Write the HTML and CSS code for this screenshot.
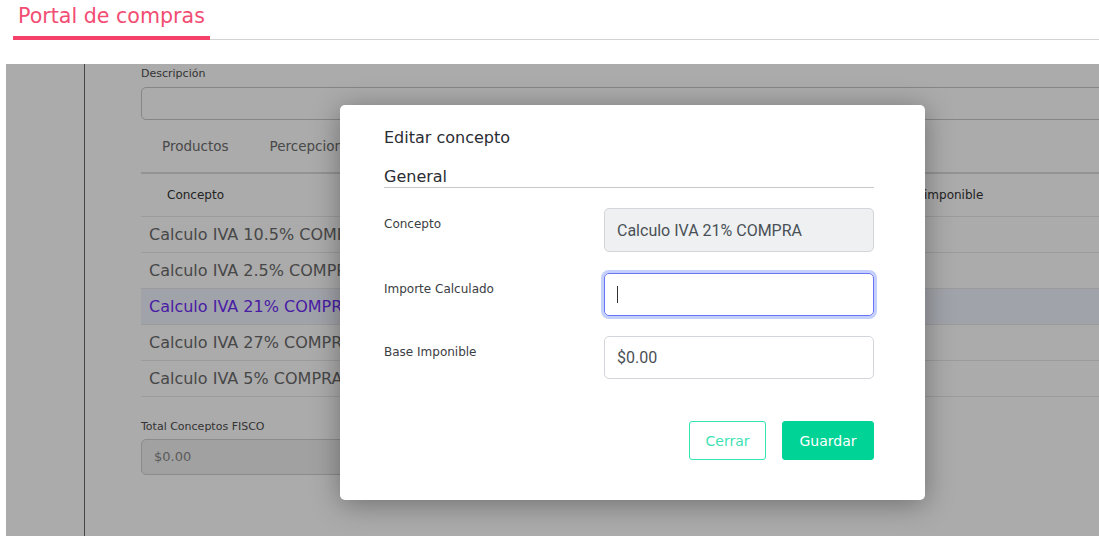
FILE: index.html
```html
<!DOCTYPE html>
<html lang="es">
<head>
<meta charset="utf-8">
<title>Portal de compras</title>
<link rel="stylesheet" href="styles.css">
</head>
<body>
<header class="topbar">
  <div class="tab-active">Portal de compras</div>
</header>
<div class="app">
  <aside class="sidebar"></aside>
  <main class="content">
    <label class="lbl">Descripción</label>
    <div class="desc-input"></div>
    <nav class="tabs">
      <span class="tab">Productos</span>
      <span class="tab">Percepciones</span>
      <span class="tab">Conceptos</span>
    </nav>
    <div class="table">
      <div class="thead">
        <div class="th">Concepto</div>
        <div class="th">Importe calculado</div>
        <div class="th">Base imponible</div>
      </div>
      <div class="tr"><div class="td">Calculo IVA 10.5% COMPRA</div><div class="td"></div><div class="td"></div></div>
      <div class="tr"><div class="td">Calculo IVA 2.5% COMPRA</div><div class="td"></div><div class="td"></div></div>
      <div class="tr selected"><div class="td">Calculo IVA 21% COMPRA</div><div class="td"></div><div class="td"></div></div>
      <div class="tr"><div class="td">Calculo IVA 27% COMPRA</div><div class="td"></div><div class="td"></div></div>
      <div class="tr"><div class="td">Calculo IVA 5% COMPRA</div><div class="td"></div><div class="td"></div></div>
    </div>
    <label class="lbl total-lbl">Total Conceptos FISCO</label>
    <div class="total-input">$0.00</div>
  </main>
  <div class="backdrop"></div>
  <section class="modal">
    <h2 class="modal-title">Editar concepto</h2>
    <h3 class="section-title">General</h3>
    <div class="form-row">
      <span class="form-label">Concepto</span>
      <div class="field disabled">Calculo IVA 21% COMPRA</div>
    </div>
    <div class="form-row">
      <span class="form-label">Importe Calculado</span>
      <div class="field focused"><span class="caret"></span></div>
    </div>
    <div class="form-row row-last">
      <span class="form-label">Base Imponible</span>
      <div class="field">$0.00</div>
    </div>
    <div class="actions">
      <button class="btn btn-outline">Cerrar</button>
      <button class="btn btn-primary">Guardar</button>
    </div>
  </section>
</div>
</body>
</html>
```

FILE: styles.css
```css
* { box-sizing: border-box; }

html, body {
  margin: 0;
  padding: 0;
  background: #ffffff;
  font-family: "DejaVu Sans", "Noto Sans", sans-serif;
  overflow: hidden;
  height: 536px;
}

.topbar {
  display: flex;
  margin-left: 13px;
  border-bottom: 1px solid #d3d3d3;
  height: 40px;
}

.tab-active {
  padding: 0 5px;
  height: 40px;
  line-height: 32px;
  border-bottom: 4px solid #f5416a;
  color: #f24d72;
  font-size: 20.6px;
  font-weight: 400;
}

.app {
  position: relative;
  margin: 24px 0 0 6px;
  height: 472px;
  display: flex;
  overflow: hidden;
}

.sidebar {
  width: 79px;
  flex: none;
  border-right: 1px solid #6a6a6a;
}

.content {
  flex: none;
  width: 1020px;
  padding-left: 56px;
  color: #6a6a6a;
}

.lbl {
  display: block;
  font-size: 11px;
  line-height: 18px;
  margin-top: 1px;
  color: #4d4d4d;
}

.desc-input {
  margin-top: 4px;
  height: 33px;
  border: 1px solid #c8c8c8;
  border-radius: 5px;
  background: #fff;
}

.tabs {
  display: flex;
  height: 52px;
  align-items: center;
  font-size: 13.5px;
  color: #6d6d6d;
}

.tab {
  padding: 0 20px 0 21px;
}

.table {
  border-top: 2px solid #dcdcdc;
}

.thead, .tr {
  display: grid;
  grid-template-columns: 360px 364px 1fr;
}

.thead {
  height: 43px;
  align-items: center;
  border-bottom: 1px solid #e8e8e8;
}

.th {
  padding-left: 26px;
  font-size: 12px;
  color: #333;
}

.tr {
  height: 36px;
  align-items: center;
  border-bottom: 1px solid #e8e8e8;
  font-size: 16px;
  color: #6b6b6b;
}

.td {
  padding-left: 8px;
  white-space: nowrap;
}

.tr.selected {
  background: #eff4fd;
  color: #6d2cf5;
}

.total-lbl {
  margin-top: 21px;
  font-size: 11px;
  color: #4d4d4d;
}

.total-input {
  margin-top: 3px;
  height: 36px;
  width: 600px;
  border: 1px solid #cfcfcf;
  border-radius: 5px;
  background: #f0f0f0;
  font-size: 13px;
  line-height: 34px;
  padding-left: 12px;
  color: #8a8a8a;
}

.backdrop {
  position: absolute;
  inset: 0;
  background: rgba(0, 0, 0, 0.33);
}

.modal {
  position: absolute;
  left: 334px;
  top: 41px;
  width: 585px;
  height: 395px;
  background: #fff;
  border-radius: 5px;
  box-shadow: 0 4px 28px rgba(0, 0, 0, 0.35);
  padding: 22px 51px 40px 44px;
  display: flex;
  flex-direction: column;
}

.modal-title {
  margin: 0;
  font-size: 16px;
  font-weight: 400;
  line-height: 22px;
  color: #2a2d33;
}

.section-title {
  margin: 18px 0 0;
  font-size: 16px;
  font-weight: 400;
  line-height: 20px;
  color: #2a2d33;
  border-bottom: 1px solid #c9c9c9;
}

.form-row {
  display: flex;
  margin-top: 20px;
}

.form-row + .form-row {
  margin-top: 21px;
}

.form-row.row-last {
  margin-top: 20px;
}

.form-label {
  width: 220px;
  flex: none;
  padding-top: 7px;
  font-size: 12px;
  line-height: 18px;
  color: #3a3d42;
}

.field {
  width: 270px;
  height: 43px;
  border: 1px solid #d2d5d9;
  border-radius: 5px;
  padding-left: 12px;
  font-family: Roboto, "Liberation Sans", sans-serif;
  font-size: 16px;
  line-height: 41px;
  color: #4a5056;
  display: flex;
  align-items: center;
}

.field.disabled {
  height: 44px;
  background: #eef0f2;
}

.field.focused {
  border-color: #6874f5;
  box-shadow: 0 0 0 3px #c4d0fb;
}

.caret {
  display: block;
  width: 1px;
  height: 17px;
  background: #333;
}

.actions {
  display: flex;
  justify-content: flex-end;
  gap: 16px;
  margin-top: 42px;
}

.btn {
  height: 39px;
  border-radius: 3px;
  font-family: "DejaVu Sans", "Noto Sans", sans-serif;
  font-size: 14px;
  padding: 0;
  cursor: pointer;
}

.btn-outline {
  width: 77px;
  background: #fff;
  border: 1px solid #33e5b1;
  color: #3fe3b3;
}

.btn-primary {
  width: 92px;
  background: #00d396;
  border: 1px solid #00d396;
  color: #ffffff;
}
```
